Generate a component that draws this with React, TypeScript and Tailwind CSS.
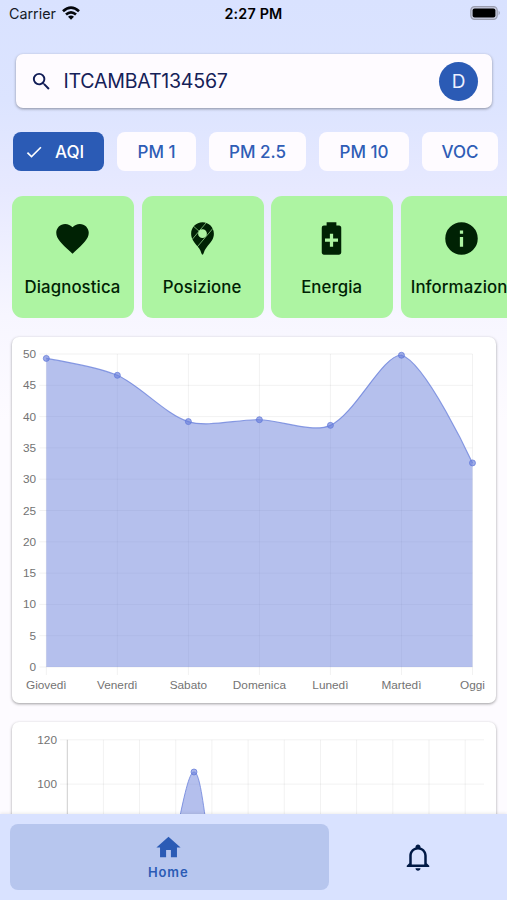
import React from 'react';
import { MdCheck, MdSearch } from 'react-icons/md';

const CHIPS = [
  { label: 'PM 1', width: 'w-[79px]' },
  { label: 'PM 2.5', width: 'w-[97px]' },
  { label: 'PM 10', width: 'w-[90px]' },
  { label: 'VOC', width: 'w-[76px]' },
];

const ICONS = {
  heart:
    'M12,21.35L10.55,20.03C5.4,15.36 2,12.27 2,8.5C2,5.41 4.42,3 7.5,3C9.24,3 10.91,3.81 12,5.08C13.09,3.81 14.76,3 16.5,3C19.58,3 22,5.41 22,8.5C22,12.27 18.6,15.36 13.45,20.03L12,21.35Z',
  battery:
    'M16.67,4H15V2H9V4H7.33A1.33,1.33 0 0,0 6,5.33V20.66C6,21.4 6.6,22 7.33,22H16.67A1.33,1.33 0 0,0 18,20.67V5.33C18,4.6 17.4,4 16.67,4M16,14H13V17H11V14H8V12H11V9H13V12H16V14Z',
  info: 'M13,9H11V7H13M13,17H11V11H13M12,2A10,10 0 0,0 2,12A10,10 0 0,0 12,22A10,10 0 0,0 22,12A10,10 0 0,0 12,2Z',
  home: 'M10,20V14H14V20H19V12H22L12,3L2,12H5V20H10Z',
  bell: 'M10 21H14C14 22.1 13.1 23 12 23S10 22.1 10 21M21 19V20H3V19L5 17V11C5 7.9 7 5.2 10 4.3V4C10 2.9 10.9 2 12 2S14 2.9 14 4V4.3C17 5.2 19 7.9 19 11V17L21 19M17 11C17 8.2 14.8 6 12 6S7 8.2 7 11V18H17V11Z',
};

function Icon({ path, className }: { path: string; className: string }) {
  return (
    <svg viewBox="0 0 24 24" fill="currentColor" className={className}>
      <path d={path} />
    </svg>
  );
}

function MapPin() {
  return (
    <svg viewBox="0 0 24 24" className="h-[39px] w-[39px]">
      <path
        fill="#002204"
        fillRule="evenodd"
        d="M12 2C8.1 2 5 5.1 5 9C5 12.2 6.9 14.2 9 16.9C9.7 17.8 10.3 18.5 10.7 19.4C11.2 20.5 11.4 22 12 22C12.6 22 12.8 20.5 13.3 19.4C13.7 18.5 14.2 17.9 14.7 17.2C16.9 14.3 19 12.4 19 9C19 5.1 15.9 2 12 2M12 6.3A2.7 2.7 0 1 1 12 11.7A2.7 2.7 0 1 1 12 6.3Z"
      />
      <path
        stroke="#adf4a2"
        strokeWidth="0.4"
        d="M6.4 4.4L10 7.6M14.3 2.3L10 7.4M10 7.4L5.6 12.6M18.4 5.8L8.8 17.1"
      />
    </svg>
  );
}

function Tile({ label, children }: { label: string; children: React.ReactNode }) {
  return (
    <div className="flex h-[122px] w-[122px] shrink-0 flex-col items-center rounded-[11px] bg-[#adf4a2] pt-[23px] pr-[1px] text-[#002204]">
      {children}
      <span className="mt-[17px] text-[16.8px] leading-6 font-medium tracking-[0.1px] whitespace-nowrap">{label}</span>
    </div>
  );
}

const DAYS = ['Giovedì', 'Venerdì', 'Sabato', 'Domenica', 'Lunedì', 'Martedì', 'Oggi'];
const AQI = [49.3, 46.6, 39.2, 39.5, 38.6, 49.8, 32.6];
const TICKS = [50, 45, 40, 35, 30, 25, 20, 15, 10, 5, 0];

const LEFT = 34.3;
const TOP = 17;
const STEP_X = 71.03;
const HEIGHT = 313;

const points = AQI.map((v, i) => ({ x: LEFT + i * STEP_X, y: TOP + HEIGHT * (1 - v / 50) }));

// Smoothed line, control points are weighted by the distance to the neighbours
function smooth(pts: { x: number; y: number }[], tension = 0.3) {
  const clamp = (y: number) => Math.max(TOP, Math.min(TOP + HEIGHT, y));
  const cps = pts.map((p, i) => {
    const prev = pts[i - 1] ?? p;
    const next = pts[i + 1] ?? p;
    const a = Math.hypot(p.x - prev.x, p.y - prev.y);
    const b = Math.hypot(next.x - p.x, next.y - p.y);
    // end points have no tangent of their own
    const isEnd = prev === p || next === p;
    const fa = isEnd ? 0 : (tension * a) / (a + b);
    const fb = isEnd ? 0 : (tension * b) / (a + b);
    return {
      inX: p.x - fa * (next.x - prev.x),
      inY: clamp(p.y - fa * (next.y - prev.y)),
      outX: p.x + fb * (next.x - prev.x),
      outY: clamp(p.y + fb * (next.y - prev.y)),
    };
  });
  return pts
    .map((p, i) =>
      i === 0
        ? `M${p.x} ${p.y}`
        : `C${cps[i - 1].outX} ${cps[i - 1].outY} ${cps[i].inX} ${cps[i].inY} ${p.x} ${p.y}`
    )
    .join('');
}

function WeekChart() {
  const line = smooth(points);
  const right = LEFT + STEP_X * 6;
  const bottom = TOP + HEIGHT;
  return (
    <svg viewBox="0 0 484 366" className="block h-[366px] w-[484px] font-['Liberation_Sans',sans-serif]">
      <g stroke="#000" strokeOpacity="0.055">
        {TICKS.map((t) => {
          const y = TOP + HEIGHT * (1 - t / 50);
          return <line key={t} x1={LEFT - 7} x2={right} y1={y} y2={y} />;
        })}
        {DAYS.map((d, i) => (
          <line key={d} x1={LEFT + i * STEP_X} x2={LEFT + i * STEP_X} y1={TOP} y2={bottom + 8} />
        ))}
      </g>
      <path d={`${line}L${right} ${bottom}L${LEFT} ${bottom}Z`} fill="#6c82dc" fillOpacity="0.5" />
      <path d={line} fill="none" stroke="#6d83dc" strokeOpacity="0.8" strokeWidth="1.2" />
      {points.map((p) => (
        <circle key={p.x} cx={p.x} cy={p.y} r="3" fill="#6a80dc" fillOpacity="0.65" stroke="#6078d8" strokeOpacity="0.7" />
      ))}
      <g fill="#737373" fontSize="11.8">
        {TICKS.map((t) => (
          <text key={t} x="24" y={TOP + HEIGHT * (1 - t / 50) + 4} textAnchor="end">
            {t}
          </text>
        ))}
        {DAYS.map((d, i) => (
          <text key={d} x={LEFT + i * STEP_X} y="352" textAnchor="middle">
            {d}
          </text>
        ))}
      </g>
    </svg>
  );
}

function HourChart() {
  return (
    <svg viewBox="0 0 484 366" className="block h-[366px] w-[484px] font-['Liberation_Sans',sans-serif]">
      <g stroke="#000" strokeOpacity="0.055">
        {[0, 1, 2, 3, 4, 5, 6].map((i) => (
          <line key={i} x1="48" x2="472" y1={17.8 + i * 44.3} y2={17.8 + i * 44.3} />
        ))}
        {[1, 2, 3, 4, 5, 6, 7, 8, 9, 10, 11].map((i) => (
          <line key={i} x1={55.2 + i * 36.18} x2={55.2 + i * 36.18} y1="17.8" y2="292" />
        ))}
      </g>
      <line x1="55.3" x2="55.3" y1="17.8" y2="292" stroke="#000" strokeOpacity="0.2" />
      <path
        d="M165 108C172 75 177 50 182 50C187 50 190 72 195 108Z"
        fill="#6a80dc"
        fillOpacity="0.5"
        stroke="#6d83dc"
        strokeOpacity="0.8"
      />
      <circle cx="182" cy="50" r="3" fill="#6a80dc" fillOpacity="0.6" stroke="#6078d8" strokeOpacity="0.7" />
      <g fill="#737373" fontSize="11.8" textAnchor="end">
        <text x="45" y="22">120</text>
        <text x="45" y="66">100</text>
      </g>
    </svg>
  );
}

function StatusBar() {
  return (
    <header className="grid h-7 grid-cols-3 items-center pr-[6px] pl-[9px] text-[14.3px] text-[#161a26]">
      <div className="flex items-center gap-[6px]">
        <span>Carrier</span>
        <svg viewBox="0 0 18 14" className="mb-[2px] h-[14px] w-[18px]" fill="none" stroke="#05070c" strokeWidth="2.7">
          <path d="M1 5.3Q9 -1.9 17 5.3" />
          <path d="M4 8.5Q9 4.2 14 8.5" />
          <path d="M9 13.7L6 10.7Q9 8.3 12 10.7Z" fill="#05070c" stroke="none" />
        </svg>
      </div>
      <span className="pr-[3px] text-center font-semibold tracking-[0.2px] whitespace-nowrap text-black">2:27 PM</span>
      <svg viewBox="0 0 31 14" className="mb-[2px] h-[14px] w-[31px] justify-self-end">
        <rect x="0.8" y="0.7" width="26.4" height="12.6" rx="3.7" fill="#c9cde0" stroke="#9a9daf" strokeWidth="1.2" />
        <rect x="2.6" y="2.4" width="22.8" height="9.2" rx="2" fill="#000" />
        <path d="M28.6 4.6Q31 7 28.6 9.4Z" fill="#9a9daf" />
      </svg>
    </header>
  );
}

export default function App() {
  return (
    <div className="flex h-[900px] w-[507px] flex-col overflow-hidden bg-[linear-gradient(to_bottom,#d9e2ff_0px,#dce4ff_100px,#e7e9ff_190px,#f7f6ff_315px,#fdfbff_420px)] font-[Inter,sans-serif]">
      <StatusBar />

      <main className="min-h-0 flex-1 overflow-hidden">
        <div className="mt-[26px] mr-[15px] ml-[15.5px] flex h-[54px] items-center rounded-[7px] bg-[#fefbff] pr-[14px] pl-[14px] shadow-[0_1px_3px_rgba(0,0,0,0.38)]">
          <MdSearch className="h-[23px] w-[23px] text-[#101c56]" />
          <span className="ml-[11px] flex-1 pt-[2px] text-[19.6px] tracking-[-0.25px] text-[#152158]">ITCAMBAT134567</span>
          <div className="flex h-[39px] w-[39px] items-center justify-center rounded-full bg-[#2b5bb5] pt-[2px] text-[19px] text-[#edf0ff]">
            D
          </div>
        </div>

        <div className="mt-6 ml-[13px] flex gap-[13px] text-[17px] font-medium">
          <div className="flex h-[39px] w-[91px] shrink-0 items-center rounded-lg bg-[#2b5bb5] pl-[11px] text-white">
            <MdCheck className="h-5 w-5" />
            <span className="ml-[11px] pt-[2px]">AQI</span>
          </div>
          {CHIPS.map(({ label, width }) => (
            <div
              key={label}
              className={`${width} flex h-[39px] shrink-0 items-center justify-center rounded-lg bg-[#fefbff] pt-[2px] text-[#2f5db6]`}
            >
              {label}
            </div>
          ))}
        </div>

        <div className="mt-[24.5px] ml-3 flex gap-[7.6px]">
          <Tile label="Diagnostica">
            <Icon path={ICONS.heart} className="h-[39px] w-[39px]" />
          </Tile>
          <Tile label="Posizione">
            <MapPin />
          </Tile>
          <Tile label="Energia">
            <Icon path={ICONS.battery} className="h-[39px] w-[39px]" />
          </Tile>
          <Tile label="Informazioni">
            <Icon path={ICONS.info} className="h-[39px] w-[39px]" />
          </Tile>
        </div>

        <div className="mt-[19px] ml-3 flex w-[484px] flex-col gap-[19.5px]">
          <section className="rounded-[7px] bg-white shadow-[0_1px_3px_rgba(0,0,0,0.38)]">
            <WeekChart />
          </section>
          <section className="rounded-[7px] bg-white shadow-[0_1px_3px_rgba(0,0,0,0.38)]">
            <HourChart />
          </section>
        </div>
      </main>

      <nav className="flex h-[86px] shrink-0 bg-[#d9e2ff] py-[10px] pl-[9.5px] shadow-[0_-1px_3px_rgba(0,0,0,0.08)]">
        <div className="flex w-[319.5px] flex-col items-center rounded-lg bg-[#b7c6ee] pt-[9px] pr-[2px] text-[#2b5bb5]">
          <Icon path={ICONS.home} className="h-[29px] w-[29px]" />
          <span className="text-[13px] leading-5 font-semibold tracking-[0.9px]">Home</span>
        </div>
        <div className="flex flex-1 items-center justify-center text-[#001945]">
          <Icon path={ICONS.bell} className="h-[30px] w-[30px]" />
        </div>
      </nav>
    </div>
  );
}
